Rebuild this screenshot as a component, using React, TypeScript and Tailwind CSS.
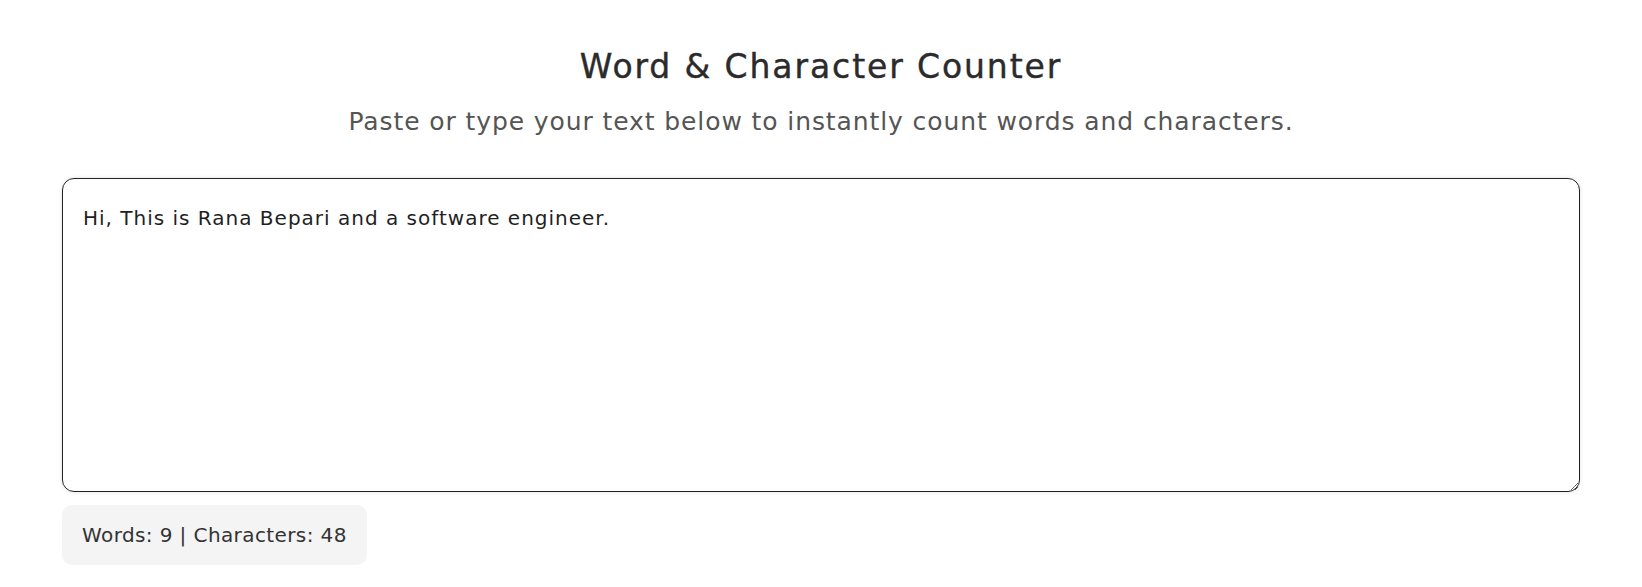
import { useState } from "react";

const App = () => {
  const [text, setText] = useState("Hi, This is Rana Bepari and a software engineer.");

  const words = text.trim() ? text.trim().split(/\s+/).length : 0;
  const characters = text.length;

  return (
    <div className="min-h-screen bg-white px-[62px] pt-[44px] font-['DejaVu_Sans',sans-serif]">
      {/* Header */}
      <div className="text-center">
        <h1 className="text-[33px] leading-[46px] font-normal tracking-[1.9px] text-[#2b2b2b] [-webkit-text-stroke:0.4px_#2b2b2b]">
          Word &amp; Character Counter
        </h1>
        <p className="mt-[14px] text-[25px] leading-[36px] tracking-[0.9px] text-[#555]">
          Paste or type your text below to instantly count words and characters.
        </p>
      </div>

      {/* Input */}
      <textarea
        value={text}
        onChange={(e) => setText(e.target.value)}
        className="mt-[38px] block w-full h-[314px] rounded-[12px] border border-[#222] px-[20px] pt-[24px] pb-4 text-[20px] leading-[30px] tracking-[1px] text-[#1f1f1f] shadow-[0_0_4px_rgba(0,0,0,0.12)] outline-none"
      />

      {/* Stats */}
      <div className="mt-[13px] inline-block rounded-[10px] bg-[#f4f4f4] px-[20px] py-[15px] text-[20px] leading-[30px] tracking-[0.4px] text-[#333]">
        Words: {words} | Characters: {characters}
      </div>
    </div>
  );
};

export default App;
